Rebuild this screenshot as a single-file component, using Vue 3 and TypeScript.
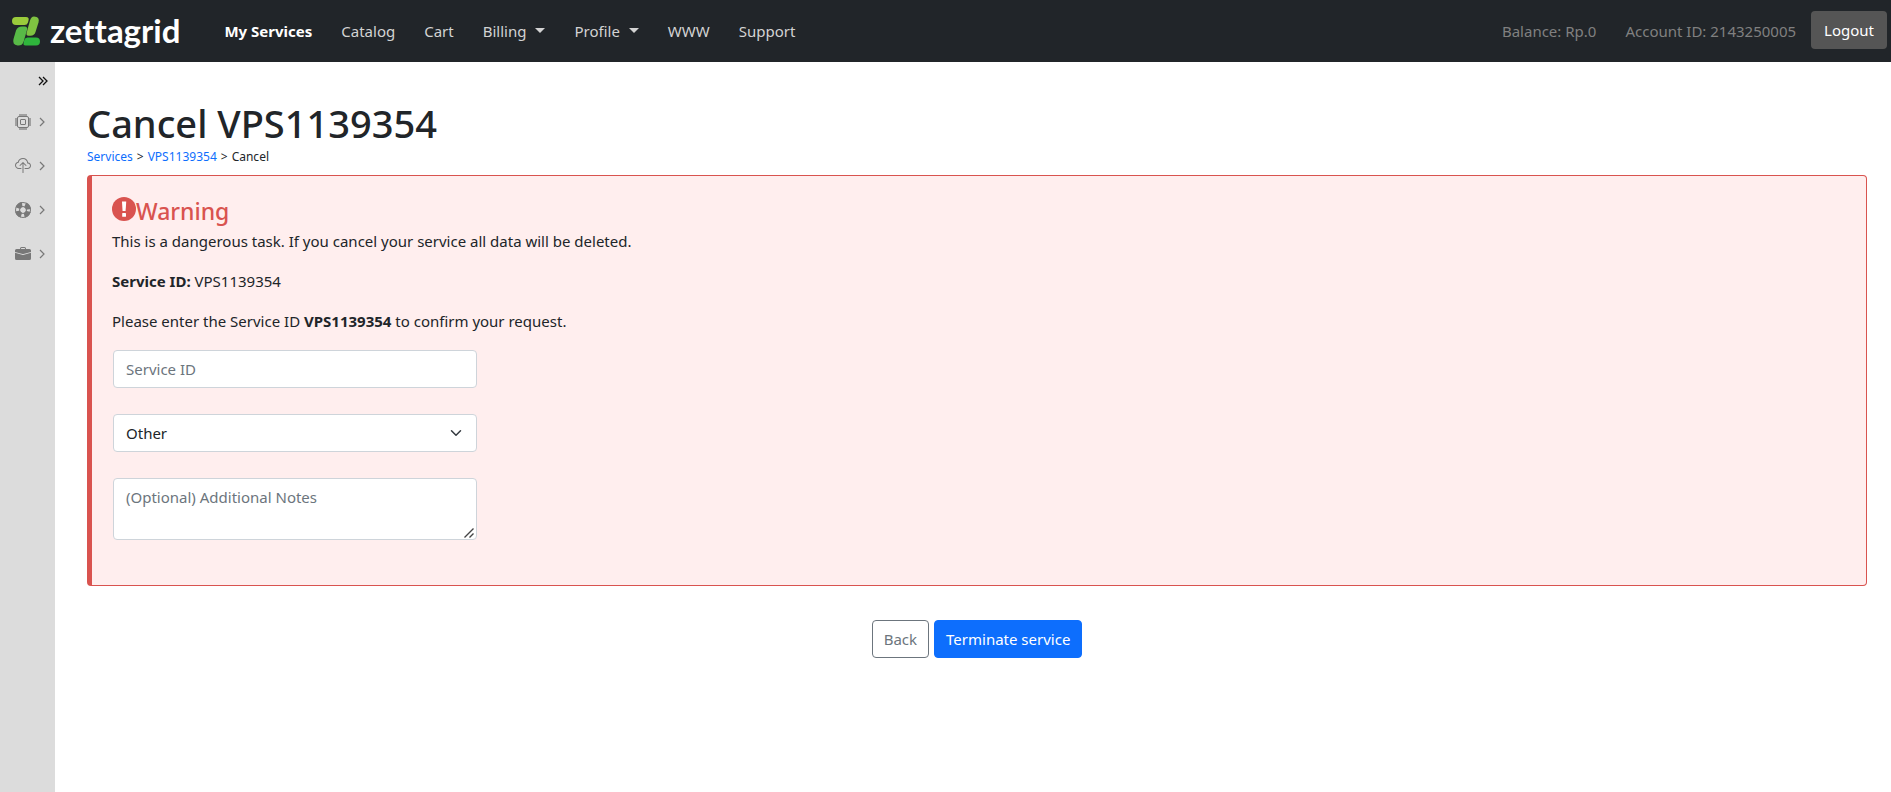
<script setup lang="ts">
import { ref } from 'vue'

interface NavItem {
  label: string
  active?: boolean
  dropdown?: boolean
}

const navItems: NavItem[] = [
  { label: 'My Services', active: true },
  { label: 'Catalog' },
  { label: 'Cart' },
  { label: 'Billing', dropdown: true },
  { label: 'Profile', dropdown: true },
  { label: 'WWW' },
  { label: 'Support' },
]

const serviceCode = 'VPS1139354'
const confirmId = ref('')
const reason = ref('Other')
const notes = ref('')
</script>

<template>
  <div class="page">
    <header class="navbar">
      <a class="brand" href="#" aria-label="zettagrid">
        <svg class="mark" viewBox="0 0 28 30" width="28" height="30" aria-hidden="true">
          <path d="M4 1H14Q17.500 1 16.500 4.500L16 6.500Q15.200 9 12.500 9H4A4 4 0 0 1 4 1Z" fill="#9acb3b" />
          <path d="M10 10.500H12.500Q16 10.500 15 14L11.500 26Q10 30 5.500 29.500Q0 28.500 1.500 23L4 14.500Q5.500 10.500 10 10.500Z" fill="#58b947" />
          <path d="M22 0.500Q28 0.500 26.500 6.500L23.500 16Q22.300 19.800 18.500 19.800H16.500Q13.800 19.800 14.700 16.500L18 4.500Q19.200 0.500 22 0.500Z" fill="#7fc241" />
          <path d="M15.500 21.500H24A4 4 0 0 1 24 29.500H13.500Q10.800 29.500 11.700 26.500L12.300 24Q13 21.500 15.500 21.500Z" fill="#2fb53c" />
        </svg>
        <span class="wordmark">zettagrid</span>
      </a>
      <nav class="links">
        <a v-for="item in navItems" :key="item.label" href="#" :class="{ active: item.active }">
          {{ item.label }}<span v-if="item.dropdown" class="caret"></span>
        </a>
      </nav>
      <div class="account">
        <span>Balance: Rp.0</span>
        <span>Account ID: 2143250005</span>
      </div>
      <button class="logout" type="button">Logout</button>
    </header>

    <div class="body">
      <aside class="sidebar">
        <button class="expand" type="button" aria-label="Expand menu">
          <svg viewBox="0 0 10 10" width="10" height="10" fill="none" stroke="#111" stroke-width="1.300"><path d="M1 1l4 4-4 4M5 1l4 4-4 4" /></svg>
        </button>
        <button class="side-item" type="button" aria-label="Compute">
          <svg class="icon" viewBox="0 0 16 16" width="16" height="16" fill="none" stroke="currentColor">
            <path d="M4 1h8M4 15h8M1 4v8M15 4v8" stroke-width="2" opacity="0.600" />
            <rect x="2.500" y="2.500" width="11" height="11" rx="1.500" fill="#dcdcdc" />
            <rect x="5.500" y="5.500" width="5" height="5" rx="0.500" />
          </svg>
          <svg class="chevron" viewBox="0 0 6 10" width="6" height="10"><path d="M1 1l4 4-4 4" /></svg>
        </button>
        <button class="side-item" type="button" aria-label="Cloud backup">
          <svg class="icon" viewBox="0 0 16 16" width="16" height="16" fill="currentColor">
            <path fill-rule="evenodd" d="M4.406 1.342A5.530 5.530 0 0 1 8 0c2.690 0 4.923 2 5.166 4.579C14.758 4.804 16 6.137 16 7.773 16 9.569 14.502 11 12.687 11H10a.5.5 0 0 1 0-1h2.688C13.979 10 15 8.988 15 7.773c0-1.216-1.020-2.228-2.313-2.228h-.5v-.5C12.188 2.825 10.328 1 8 1a4.530 4.530 0 0 0-2.941 1.100c-.757.652-1.153 1.438-1.153 2.055v.448l-.445.049C2.064 4.805 1 5.952 1 7.318 1 8.785 2.230 10 3.781 10H6a.5.5 0 0 1 0 1H3.781C1.708 11 0 9.366 0 7.318c0-1.763 1.266-3.223 2.942-3.593.143-.863.698-1.723 1.464-2.383z" />
            <path fill-rule="evenodd" d="M7.646 4.146a.5.5 0 0 1 .708 0l3 3a.5.5 0 0 1-.708.708L8.500 5.707V14.500a.5.5 0 0 1-1 0V5.707L5.354 7.854a.5.5 0 1 1-.708-.708l3-3z" />
          </svg>
          <svg class="chevron" viewBox="0 0 6 10" width="6" height="10"><path d="M1 1l4 4-4 4" /></svg>
        </button>
        <button class="side-item" type="button" aria-label="Support">
          <svg class="icon" viewBox="0 0 16 16" width="16" height="16" fill="none" stroke="currentColor">
            <circle cx="8" cy="8" r="7.500" />
            <circle cx="8" cy="8" r="5.500" stroke-width="5" stroke-dasharray="5.600 3.039" stroke-dashoffset="-1.519" />
            <circle cx="8" cy="8" r="3.500" />
          </svg>
          <svg class="chevron" viewBox="0 0 6 10" width="6" height="10"><path d="M1 1l4 4-4 4" /></svg>
        </button>
        <button class="side-item" type="button" aria-label="Business">
          <svg class="icon" viewBox="0 0 16 16" width="16" height="16" fill="currentColor">
            <path d="M6.500 1A1.500 1.500 0 0 0 5 2.500V3H1.500A1.500 1.500 0 0 0 0 4.500v1.384l7.614 2.030a1.500 1.500 0 0 0 .772 0L16 5.884V4.500A1.500 1.500 0 0 0 14.500 3H11v-.5A1.500 1.500 0 0 0 9.500 1h-3zm0 1h3a.5.5 0 0 1 .5.5V3H6v-.5a.5.5 0 0 1 .5-.5z" />
            <path d="M0 12.500A1.500 1.500 0 0 0 1.500 14h13a1.500 1.500 0 0 0 1.500-1.500V6.850L8.129 8.947a.5.5 0 0 1-.258 0L0 6.850v5.650z" />
          </svg>
          <svg class="chevron" viewBox="0 0 6 10" width="6" height="10"><path d="M1 1l4 4-4 4" /></svg>
        </button>
      </aside>

      <main class="content">
        <h1>Cancel {{ serviceCode }}</h1>
        <div class="crumbs">
          <a href="#">Services</a><span>&gt;</span><a href="#">{{ serviceCode }}</a><span>&gt;</span><span>Cancel</span>
        </div>

        <form id="cancel-form" class="alert" @submit.prevent>
          <h4>
            <svg viewBox="0 0 24 24" width="24" height="24" aria-hidden="true">
              <circle cx="12" cy="12" r="12" fill="#d9534f" />
              <path d="M10 4.500h4.200l-.6 9.500h-3z" fill="#fff" />
              <rect x="10.200" y="16" width="3.800" height="3.800" rx="0.600" fill="#fff" />
            </svg>
            <span>Warning</span>
          </h4>
          <p>This is a dangerous task. If you cancel your service all data will be deleted.</p>
          <p><strong>Service ID:</strong> {{ serviceCode }}</p>
          <p>Please enter the Service ID <strong>{{ serviceCode }}</strong> to confirm your request.</p>
          <div class="fields">
            <input v-model="confirmId" class="field" type="text" placeholder="Service ID" aria-label="Service ID" />
            <div class="select-wrap">
              <select v-model="reason" class="field" aria-label="Reason">
                <option>Other</option>
              </select>
              <svg class="arrow" viewBox="0 0 16 16" width="12" height="12" fill="none" stroke="#343a40" stroke-width="2" stroke-linecap="round" stroke-linejoin="round"><path d="M2 5l6 6 6-6" /></svg>
            </div>
            <div class="notes-wrap">
              <textarea v-model="notes" class="field" rows="2" placeholder="(Optional) Additional Notes" aria-label="Additional notes"></textarea>
              <svg class="grip" viewBox="0 0 10 10" width="10" height="10" fill="none" stroke="#444" stroke-width="1.400" aria-hidden="true"><path d="M0.500 9.500l9-9M5.500 9.500l4-4" /></svg>
            </div>
          </div>
        </form>

        <div class="actions">
          <button class="btn back" type="button">Back</button>
          <button class="btn terminate" type="submit" form="cancel-form">Terminate service</button>
        </div>
      </main>
    </div>
  </div>
</template>

<style>
body {
  margin: 0;
}
</style>

<style scoped>
* {
  box-sizing: border-box;
}
.page {
  display: flex;
  flex-direction: column;
  min-height: 100vh;
  background: #fff;
  color: #212529;
  font-family: "Noto Sans", "Open Sans", sans-serif;
  font-size: 15px;
  line-height: 24px;
}
a {
  color: #0d6efd;
  text-decoration: none;
}
button {
  font: inherit;
  cursor: pointer;
}
.navbar {
  display: flex;
  align-items: center;
  height: 62px;
  padding: 0 4px 0 12px;
  background: #212529;
}
.brand {
  display: flex;
  align-items: center;
  gap: 10px;
  margin-right: 44px;
}
.wordmark {
  padding-bottom: 2px;
  color: #fff;
  font-family: Lato, sans-serif;
  font-size: 33px;
  font-weight: 700;
  line-height: 40px;
  font-variant-ligatures: none;
}
.links {
  display: flex;
  gap: 29px;
}
.links a {
  display: flex;
  align-items: center;
  color: #d3d3d3;
}
.links a.active {
  color: #fff;
  font-weight: 700;
}
.caret {
  margin: 0 0 2px 9px;
  border: 5px solid transparent;
  border-top-color: currentColor;
  border-bottom: 0;
}
.account {
  display: flex;
  gap: 29px;
  margin-left: auto;
  color: #808080;
}
.logout {
  height: 38px;
  margin: 0 0 2px 15px;
  padding: 0 13px;
  border: 0;
  border-radius: 4px;
  background: #555;
  color: #fff;
}
.body {
  display: flex;
  flex: 1;
}
.sidebar {
  flex: none;
  width: 55px;
  background: #dcdcdc;
}
.expand,
.side-item {
  display: flex;
  align-items: center;
  width: 100%;
  border: 0;
  background: none;
  color: #787878;
}
.expand {
  justify-content: flex-end;
  height: 38px;
  padding: 0 7px;
}
.side-item {
  gap: 8px;
  height: 44px;
  padding: 0 0 0 15px;
}
.chevron {
  fill: none;
  stroke: #787878;
  stroke-width: 1.2;
}
.content {
  flex: 1;
  min-width: 0;
  padding: 37px 24px 32px 32px;
}
h1 {
  margin: 0;
  font-size: 38px;
  font-weight: 500;
  line-height: 48px;
}
.crumbs {
  display: flex;
  gap: 4px;
  margin: 2px 0 10px;
  font-size: 12px;
  line-height: 16px;
}
.alert {
  padding: 16px 20px 45px;
  border: 1px solid #d9534f;
  border-left-width: 5px;
  border-radius: 4px;
  background: #ffeeee;
}
h4 {
  display: flex;
  align-items: flex-start;
  height: 37px;
  margin: 0;
  padding-top: 5px;
  color: #d9534f;
  font-size: 23px;
  font-weight: 500;
  line-height: 28px;
}
p {
  margin: 0 0 16px;
}
.fields {
  display: flex;
  flex-direction: column;
  gap: 26px;
  width: 364px;
  max-width: 100%;
  margin: 17px 0 0 1px;
}
.field {
  display: block;
  width: 100%;
  height: 38px;
  margin: 0;
  padding: 6px 12px;
  border: 1px solid #ced4da;
  border-radius: 4px;
  background: #fff;
  color: #212529;
  font: inherit;
  appearance: none;
}
.field::placeholder {
  color: #6c757d;
  opacity: 1;
}
textarea.field {
  height: auto;
  min-height: 62px;
  resize: vertical;
}
textarea.field::-webkit-resizer {
  background: transparent;
}
.select-wrap,
.notes-wrap {
  position: relative;
}
.arrow {
  position: absolute;
  top: 13px;
  right: 15px;
  pointer-events: none;
}
.grip {
  position: absolute;
  right: 3px;
  bottom: 2px;
  pointer-events: none;
}
.actions {
  display: flex;
  justify-content: center;
  gap: 5px;
  margin-top: 34px;
}
.btn {
  height: 38px;
  padding: 0 11px;
  border: 1px solid #6c757d;
  border-radius: 4px;
  background: #fff;
  color: #6c757d;
}
.terminate {
  border-color: #0d6efd;
  background: #0d6efd;
  color: #fff;
}
</style>
